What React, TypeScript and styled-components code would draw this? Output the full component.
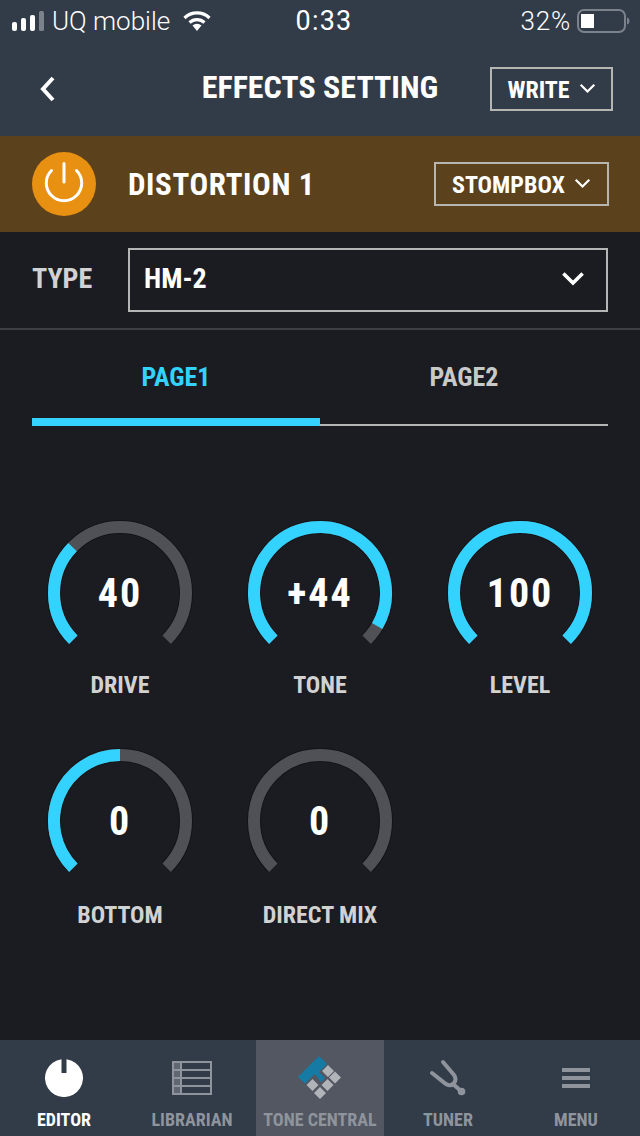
import styled, { createGlobalStyle } from 'styled-components';

const GlobalStyle = createGlobalStyle`
    html, body {
        margin: 0;
        padding: 0;
        background: #1a1c21;
    }
    * {
        box-sizing: border-box;
    }
`;

const condensed = `"Roboto Condensed", "Liberation Sans Narrow", Roboto, sans-serif`;

const Page = styled.div`
    width: 640px;
    height: 1136px;
    display: flex;
    flex-direction: column;
    background: #1a1c21;
    font-family: ${condensed};
    font-stretch: condensed;
    overflow: hidden;
`;

const TopArea = styled.header`
    height: 136px;
    background: #323b48;
    display: flex;
    flex-direction: column;
`;

const StatusBar = styled.div`
    height: 42px;
    padding: 0 10px 0 12px;
    display: grid;
    grid-template-columns: 1fr auto 1fr;
    align-items: center;
    color: #fff;
    font-family: Roboto, sans-serif;
    font-stretch: normal;
    font-size: 26px;
    font-weight: 300;
`;

const StatusLeft = styled.div`
    display: flex;
    align-items: center;
    gap: 7px;
`;

const StatusTime = styled.span`
    font-size: 27px;
    font-weight: 400;
    letter-spacing: 1.2px;
    margin-left: 6px;
`;

const StatusRight = styled.div`
    display: flex;
    align-items: center;
    justify-content: flex-end;
    gap: 6px;
    letter-spacing: 0.8px;
`;

const NavBar = styled.div`
    flex: 1;
    padding: 0 27px 0 37px;
    display: flex;
    align-items: center;
    justify-content: space-between;
    position: relative;
`;

const NavTitle = styled.h1`
    position: absolute;
    left: 0;
    right: 0;
    top: 27px;
    margin: 0;
    text-align: center;
    color: #fff;
    font-size: 32px;
    line-height: 36px;
    font-weight: 700;
`;

const OutlineButton = styled.div`
    display: flex;
    align-items: center;
    justify-content: center;
    gap: 9px;
    border: 2px solid #b5b5b2;
    color: #fff;
    font-size: 24px;
    font-weight: 700;
    height: 44px;
    padding-top: 2px;
    width: ${(p: { $w: number }) => p.$w}px;
`;

const ButtonCaret = styled.span`
    display: flex;
    margin-top: -3px;
`;

const EffectBand = styled.section`
    height: 96px;
    background: #5b421d;
    padding: 0 31px 0 32px;
    display: flex;
    align-items: center;
    gap: 32px;
`;

const PowerCircle = styled.div`
    width: 64px;
    height: 64px;
    border-radius: 50%;
    background: #e79011;
    display: flex;
`;

const EffectName = styled.div`
    flex: 1;
    color: #fff;
    font-size: 31px;
    font-weight: 700;
    letter-spacing: 0.6px;
`;

const TypeRow = styled.section`
    height: 98px;
    padding: 0 32px;
    display: flex;
    align-items: center;
    gap: 36px;
    border-bottom: 2px solid #3d3f43;
`;

const TypeLabel = styled.div`
    width: 60px;
    padding-bottom: 3px;
    color: #d2d2d2;
    font-size: 28px;
    font-weight: 700;
`;

const TypeSelect = styled.div`
    flex: 1;
    height: 64px;
    border: 2px solid #b5b5b5;
    padding: 0 21px 3px 14px;
    display: flex;
    align-items: center;
    justify-content: space-between;
    color: #fff;
    font-size: 28px;
    font-weight: 700;
`;

const Tabs = styled.nav`
    margin: 0 32px;
    height: 96px;
    display: grid;
    grid-template-columns: 1fr 1fr;
`;

const Tab = styled.div<{ $active?: boolean }>`
    display: flex;
    align-items: center;
    justify-content: center;
    padding-top: ${(p) => (p.$active ? '6px' : '0')};
    color: ${(p) => (p.$active ? '#33d2ff' : '#c9c9c9')};
    border-bottom: ${(p) => (p.$active ? '8px solid #33d2ff' : '2px solid #b5b5b5')};
    font-size: 26px;
    font-weight: 700;
`;

const KnobGrid = styled.section`
    flex: 1;
    padding: 87px 20px 0;
    display: grid;
    grid-template-columns: repeat(3, 200px);
    grid-auto-rows: 228px;
    align-content: start;
`;

const KnobCell = styled.div`
    display: flex;
    flex-direction: column;
    align-items: center;
`;

const KnobDial = styled.div`
    width: 160px;
    height: 160px;
    position: relative;
`;

const KnobValue = styled.div`
    position: absolute;
    inset: 0;
    display: flex;
    align-items: center;
    justify-content: center;
    color: #fff;
    font-size: 40px;
    font-weight: 700;
    letter-spacing: 2px;
`;

const KnobLabel = styled.div<{ $lower: boolean }>`
    margin-top: ${(p) => (p.$lower ? '-1px' : '-3px')};
    color: #d2d2d2;
    font-size: 24px;
    font-weight: 700;
    line-height: 30px;
    white-space: nowrap;
`;

const BottomBar = styled.footer`
    height: 96px;
    background: #323b48;
    display: grid;
    grid-template-columns: repeat(5, 128px);
`;

const BarItem = styled.div<{ $active?: boolean; $current?: boolean }>`
    background: ${(p) => (p.$active ? '#525762' : 'transparent')};
    color: ${(p) => (p.$current ? '#fff' : '#8f949c')};
    display: flex;
    flex-direction: column;
    align-items: center;
    font-size: 18px;
    font-weight: 700;
    white-space: nowrap;
`;

const BarIcon = styled.div`
    height: 69px;
    width: 100%;
    padding-top: 7px;
    display: flex;
    align-items: center;
    justify-content: center;
`;

function Chevron({ size, width }: { size: number; width: number }) {
    return (
        <svg width={size} height={size * 0.6} viewBox="0 0 20 12">
            <path d="M2 2l8 8 8-8" fill="none" stroke="#fff" strokeWidth={width} />
        </svg>
    );
}

function polar(angle: number, r: number) {
    const a = ((angle - 90) * Math.PI) / 180;
    return `${80 + r * Math.cos(a)} ${80 + r * Math.sin(a)}`;
}

function arc(from: number, to: number) {
    const large = to - from > 180 ? 1 : 0;
    return `M${polar(from, 66)}A66 66 0 ${large} 1 ${polar(to, 66)}`;
}

type KnobData = { label: string; value: string; end: number | null };

const knobs: KnobData[] = [
    { label: 'DRIVE', value: '40', end: -46 },
    { label: 'TONE', value: '+44', end: 120 },
    { label: 'LEVEL', value: '100', end: 135 },
    { label: 'BOTTOM', value: '0', end: 0 },
    { label: 'DIRECT MIX', value: '0', end: null },
];

function Knob({ label, value, end, lower }: KnobData & { lower: boolean }) {
    return (
        <KnobCell>
            <KnobDial>
                <svg width="160" height="160" viewBox="0 0 160 160">
                    <path d={arc(-135, 135)} fill="none" stroke="#000" strokeOpacity="0.3" strokeWidth="14" />
                    <path d={arc(-135, 135)} fill="none" stroke="#505156" strokeWidth="12" />
                    {end !== null && <path d={arc(-135, end)} fill="none" stroke="#33d2ff" strokeWidth="12" />}
                </svg>
                <KnobValue>{value}</KnobValue>
            </KnobDial>
            <KnobLabel $lower={lower}>{label}</KnobLabel>
        </KnobCell>
    );
}

export default function App() {
    return (
        <>
            <GlobalStyle />
            <Page>
                <TopArea>
                    <StatusBar>
                        <StatusLeft>
                            <svg width="33" height="20" viewBox="0 0 33 20">
                                <rect x="0" y="11" width="5" height="9" rx="2" fill="#fff" />
                                <rect x="9" y="7" width="5" height="13" rx="2" fill="#fff" />
                                <rect x="18" y="4" width="5" height="16" rx="2" fill="#fff" />
                                <rect x="27" y="0" width="5" height="20" rx="1.5" fill="#7b828c" />
                            </svg>
                            <span>UQ mobile</span>
                            <svg width="28" height="20" viewBox="0 0 28 20" style={{ marginLeft: 6 }}>
                                <path d="M1.5 7a18 18 0 0 1 25 0" fill="none" stroke="#fff" strokeWidth="3.2" />
                                <path d="M6.500 11.500a11 11 0 0 1 15 0" fill="none" stroke="#fff" strokeWidth="3.2" />
                                <path d="M9.500 14.500a6.500 6.500 0 0 1 9 0L14 20z" fill="#fff" />
                            </svg>
                        </StatusLeft>
                        <StatusTime>0:33</StatusTime>
                        <StatusRight>
                            <span>32%</span>
                            <svg width="53" height="24" viewBox="0 0 53 24">
                                <rect x="1" y="1" width="47" height="22" rx="6" fill="none" stroke="#7b828c" strokeWidth="2" />
                                <rect x="4" y="5" width="13" height="14" fill="#fff" />
                                <path d="M50 8.500c2 .5 2.500 2 2.500 3.500s-.5 3-2.500 3.500z" fill="#7b828c" />
                            </svg>
                        </StatusRight>
                    </StatusBar>
                    <NavBar>
                        <svg width="20" height="26" viewBox="0 0 20 26">
                            <path d="M16 2L6 13l10 11" fill="none" stroke="#fff" strokeWidth="4" />
                        </svg>
                        <NavTitle>EFFECTS SETTING</NavTitle>
                        <OutlineButton $w={123}>
                            WRITE
                            <ButtonCaret>
                                <Chevron size={17} width={2.6} />
                            </ButtonCaret>
                        </OutlineButton>
                    </NavBar>
                </TopArea>

                <EffectBand>
                    <PowerCircle>
                        <svg width="64" height="64" viewBox="0 0 64 64" fill="none" stroke="#fff" strokeWidth="3" strokeLinecap="round">
                            <path d="M19.500 18.500A17.700 17.700 0 1 0 44.500 18.500" />
                            <path d="M32 11.500v18.500" />
                        </svg>
                    </PowerCircle>
                    <EffectName>DISTORTION 1</EffectName>
                    <OutlineButton $w={175}>
                        STOMPBOX
                        <ButtonCaret>
                            <Chevron size={17} width={2.6} />
                        </ButtonCaret>
                    </OutlineButton>
                </EffectBand>

                <TypeRow>
                    <TypeLabel>TYPE</TypeLabel>
                    <TypeSelect>
                        HM-2
                        <Chevron size={24} width={3} />
                    </TypeSelect>
                </TypeRow>

                <Tabs>
                    <Tab $active>PAGE1</Tab>
                    <Tab>PAGE2</Tab>
                </Tabs>

                <KnobGrid>
                    {knobs.map((k, i) => (
                        <Knob key={k.label} {...k} lower={i > 2} />
                    ))}
                </KnobGrid>

                <BottomBar>
                    <BarItem $current>
                        <BarIcon>
                            <svg width="38" height="38" viewBox="0 0 38 38">
                                <path d="M16.500 .2A19 19 0 1 0 21.500 .2V14h-5z" fill="#fff" />
                            </svg>
                        </BarIcon>
                        EDITOR
                    </BarItem>
                    <BarItem>
                        <BarIcon>
                            <svg width="40" height="34" viewBox="0 0 40 34" fill="none" stroke="#8f949c" strokeWidth="2">
                                <path d="M1 1h8v32H1z" fill="#8f949c" fillOpacity="0.5" />
                                <rect x="1" y="1" width="38" height="32" />
                                <path d="M1 9h38M1 17h38M1 25h38M9 1v32" />
                            </svg>
                        </BarIcon>
                        LIBRARIAN
                    </BarItem>
                    <BarItem $active>
                        <BarIcon>
                            <svg width="60" height="60" viewBox="0 -2 60 60">
                                <path d="M29 6l8 8-8 8 6 6-4 4-6-8-10 9.500-7-6.500z" fill="#167ba4" />
                                <path d="M38 15l6 6-6 6-6-6zM45 21.500l6 6-6 6-6-6zM37.500 29l6 6-6 6-6-6zM30 37l6 6-6 6-6-6zM22.500 29l6 6-6 6-6-6z" fill="#b0b3b8" />
                            </svg>
                        </BarIcon>
                        TONE CENTRAL
                    </BarItem>
                    <BarItem>
                        <BarIcon>
                            <svg width="60" height="60" viewBox="-2 -2 60 60" fill="none" stroke="#8f949c" strokeWidth="4" strokeLinecap="round">
                                <path d="M12 23L26 34Q31 37 34 33Q37 29 34 25L23 12" />
                                <path d="M33 34L41.500 41.500" />
                                <circle cx="41.500" cy="41.500" r="1.800" fill="#8f949c" />
                            </svg>
                        </BarIcon>
                        TUNER
                    </BarItem>
                    <BarItem>
                        <BarIcon>
                            <svg width="28" height="20" viewBox="0 0 28 20" fill="#8f949c">
                                <rect y="0" width="28" height="4" />
                                <rect y="8" width="28" height="4" />
                                <rect y="16" width="28" height="4" />
                            </svg>
                        </BarIcon>
                        MENU
                    </BarItem>
                </BottomBar>
            </Page>
        </>
    );
}
